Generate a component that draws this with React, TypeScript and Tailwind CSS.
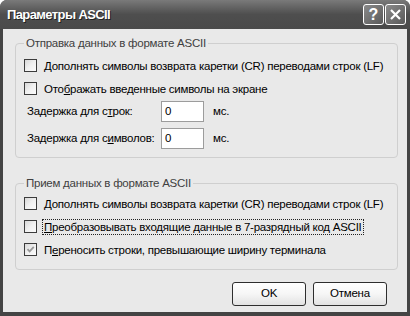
import type { ReactNode } from "react";

const FONT = { fontFamily: '"Liberation Sans", Arial, sans-serif' };

function Box({ checked }: { checked?: boolean }) {
  return (
    <span className="relative w-[13px] h-[13px] shrink-0 border border-[#3c3c3c] bg-gradient-to-br from-[#d8d8d8] via-[#f0f0f0] to-[#fbfbfb]">
      {checked && (
        <svg viewBox="0 0 11 11" className="absolute inset-0 w-[11px] h-[11px]">
          <path d="M2.5 5.2 L4.6 7.4 L8.8 2.8" fill="none" stroke="#9a9a9a" strokeWidth="1.8" />
        </svg>
      )}
    </span>
  );
}

function Check({ children, checked, focus }: { children: ReactNode; checked?: boolean; focus?: boolean }) {
  return (
    <div className="flex items-center h-[13px] gap-[5px] whitespace-nowrap">
      <Box checked={checked} />
      <span
        className={
          focus
            ? "leading-[14px] px-[1px] border border-dotted border-[#222]"
            : "leading-[14px] px-[2px]"
        }
      >
        {children}
      </span>
    </div>
  );
}

function Group({ title, children, className }: { title: string; children: ReactNode; className: string }) {
  return (
    <div className={`relative ml-[12px] w-[383px] border border-[#cfcfcf] rounded-[4px] ${className}`}>
      <span className="absolute left-[8px] -top-[8px] px-[2px] bg-[#e9e9e9] leading-[14px] text-[#404040] whitespace-nowrap">
        {title}
      </span>
      {children}
    </div>
  );
}

function Btn({ children, w }: { children: ReactNode; w: string }) {
  return (
    <button
      type="button"
      className={`${w} h-[24px] rounded-[3px] border border-[#2e2e2e] bg-gradient-to-b from-[#ffffff] via-[#f6f6f6] to-[#e2e2e2] text-black`}
    >
      {children}
    </button>
  );
}

function Field() {
  return (
    <div className="w-[43px] h-[21px] border border-[#9c9c9c] bg-white leading-[19px] pl-[3px]">0</div>
  );
}

export default function App() {
  return (
    <div className="w-[410px] h-[316px] bg-white" style={FONT}>
      <div className="w-[410px] h-[316px] flex flex-col rounded-t-[7px] overflow-hidden bg-[#444]">
        <div className="h-[29px] flex items-center justify-between pl-[7px] pr-[4px] bg-gradient-to-b from-[#7a7a7a] via-[#4e4e4e] to-[#4a4a4a]">
          <span className="text-white font-bold text-[13px] tracking-[-0.6px] [text-shadow:1px_1px_0_#222]">
            Параметры ASCII
          </span>
          <div className="flex gap-[1px] -mt-[1px]">
            <span className="w-[21px] h-[21px] rounded-[3px] border border-white bg-gradient-to-br from-[#8a8a8a] to-[#5a5a5a] text-white font-bold text-[16px] leading-[19px] text-center">
              ?
            </span>
            <span className="w-[21px] h-[21px] rounded-[3px] border border-white bg-gradient-to-br from-[#8a8a8a] to-[#5a5a5a] flex items-center justify-center">
              <svg viewBox="0 0 13 13" className="w-[13px] h-[13px]">
                <path d="M2 2 L11 11 M11 2 L2 11" stroke="white" strokeWidth="2.2" />
              </svg>
            </span>
          </div>
        </div>
        <div className="mx-[3px] mb-[4px] flex-1 bg-[#e9e9e9] flex flex-col text-black text-[11.5px] tracking-[-0.25px]">
          <Group title="Отправка данных в формате ASCII" className="mt-[14px] h-[115px] pt-[15px] pl-[8px]">
            <div className="flex flex-col gap-[10px]">
              <Check>
                <u>Д</u>ополнять символы возврата каретки (CR) переводами строк (LF)
              </Check>
              <Check>
                Ото<u>б</u>ражать введенные символы на экране
              </Check>
            </div>
            <div className="mt-[6px] flex flex-col gap-[6px] pl-[3px]">
              <div className="flex items-center whitespace-nowrap">
                <span className="w-[134px]">
                  Задержка для с<u>т</u>рок:
                </span>
                <Field />
                <span className="ml-[9px]">мс.</span>
              </div>
              <div className="flex items-center whitespace-nowrap">
                <span className="w-[134px]">
                  Задержка для с<u>и</u>мволов:
                </span>
                <Field />
                <span className="ml-[9px]">мс.</span>
              </div>
            </div>
          </Group>
          <Group title="Прием данных в формате ASCII" className="mt-[25px] h-[87px] pt-[13px] pl-[8px]">
            <div className="flex flex-col gap-[10px]">
              <Check>
                <u>Д</u>ополнять символы возврата каретки (CR) переводами строк (LF)
              </Check>
              <Check focus>
                <u>П</u>реобразовывать входящие данные в 7-разрядный код ASCII
              </Check>
              <Check checked>
                П<u>е</u>реносить строки, превышающие ширину терминала
              </Check>
            </div>
          </Group>
          <div className="mt-[12px] flex pl-[229px] gap-[7px]">
            <Btn w="w-[74px]">OK</Btn>
            <Btn w="w-[74px]">Отмена</Btn>
          </div>
        </div>
      </div>
    </div>
  );
}
